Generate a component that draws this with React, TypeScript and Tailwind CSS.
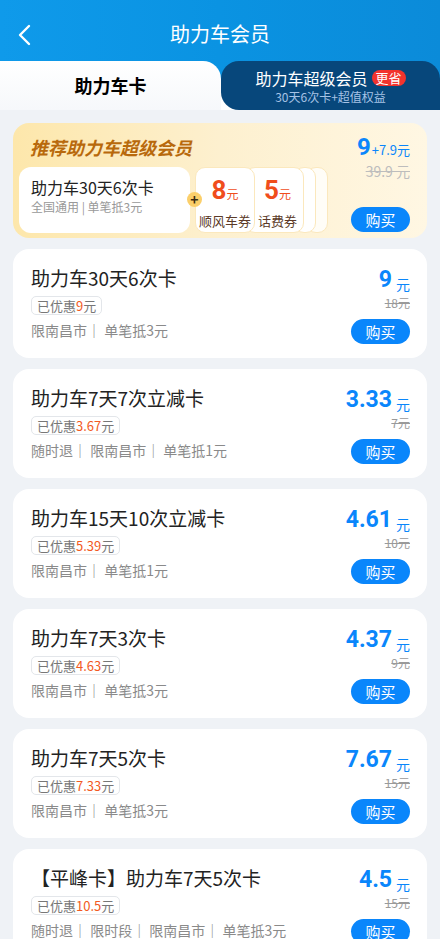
const cn = '"Noto Sans CJK SC", "Noto Sans", sans-serif';
const num = 'Roboto, "Noto Sans CJK SC", sans-serif';

interface CardData {
  title: string;
  saved: string;
  tags: string[];
  price: string;
  origin: string;
}

const cards: CardData[] = [
  { title: '助力车30天6次卡', saved: '9', tags: ['限南昌市', '单笔抵3元'], price: '9', origin: '18元' },
  { title: '助力车7天7次立减卡', saved: '3.67', tags: ['随时退', '限南昌市', '单笔抵1元'], price: '3.33', origin: '7元' },
  { title: '助力车15天10次立减卡', saved: '5.39', tags: ['限南昌市', '单笔抵1元'], price: '4.61', origin: '10元' },
  { title: '助力车7天3次卡', saved: '4.63', tags: ['限南昌市', '单笔抵3元'], price: '4.37', origin: '9元' },
  { title: '助力车7天5次卡', saved: '7.33', tags: ['限南昌市', '单笔抵3元'], price: '7.67', origin: '15元' },
  { title: '【平峰卡】助力车7天5次卡', saved: '10.5', tags: ['随时退', '限时段', '限南昌市', '单笔抵3元'], price: '4.5', origin: '15元' },
];

function BuyButton() {
  return (
    <button className="w-[59px] h-[25px] rounded-full bg-[#0a86fb] text-white text-[15px] leading-[25px]">
      购买
    </button>
  );
}

function CardItem({ card }: { card: CardData }) {
  return (
    <div className="h-[109px] shrink-0 bg-white rounded-[16px] pl-[18px] pr-[17px] pt-[16px] flex justify-between">
      <div className="flex flex-col items-start">
        <div className="text-[19px] leading-[26px] text-[#222]">{card.title}</div>
        <div className="mt-[5px] h-[19px] px-[5px] border border-[#e3e6ea] rounded-[5px] text-[13px] leading-[17px] text-[#777]">
          已优惠<span className="text-[#f25a22]">{card.saved}</span>元
        </div>
        <div className="mt-[5px] text-[14px] leading-[20px] text-[#8a8a8a] whitespace-pre">
          {card.tags.join('｜ ')}
        </div>
      </div>
      <div className="flex flex-col items-end">
        <div className="h-[30px] flex items-end text-[#0a86fb]">
          <span className="text-[23px] leading-[30px] font-bold" style={{ fontFamily: num }}>{card.price}</span>
          <span className="text-[14px] leading-[22px] ml-[4px]">元</span>
        </div>
        <div className="text-[12px] leading-[16px] text-[#9a9a9a] line-through">{card.origin}</div>
        <div className="mt-[8px]">
          <BuyButton />
        </div>
      </div>
    </div>
  );
}

function SuperCard() {
  return (
    <div className="h-[115px] rounded-[16px] bg-gradient-to-r from-[#fde7ab] via-[#fdf0cf] to-[#fff7e3] pl-[6px] pr-[17px] flex justify-between">
      <div className="flex flex-col">
        <div className="h-[44px] pl-[11px] pt-[11px] text-[18px] leading-[26px] font-bold text-[#b8690c] italic">
          推荐助力车超级会员
        </div>
        <div className="flex items-start">
          <div className="w-[171px] h-[66px] bg-white rounded-[12px] pl-[12px] pt-[9px]">
            <div className="text-[16px] leading-[22px] text-[#222]">助力车30天6次卡</div>
            <div className="text-[12px] leading-[18px] text-[#999] whitespace-pre">全国通用 | 单笔抵3元</div>
          </div>
          <div className="relative flex">
            <div className="absolute left-[-3px] top-[25px] z-20 w-[15px] h-[15px] rounded-full bg-[#fbcf6a] text-[#3a2a10] text-[14px] leading-[14px] text-center font-bold">
              +
            </div>
            <div className="relative z-10 ml-[5px] w-[60px] h-[66px] bg-white rounded-[10px] border border-[#fbe8bd] flex flex-col items-center pt-[8px]">
              <div className="text-[#f04d1c] leading-[28px]">
                <span className="text-[26px] font-bold" style={{ fontFamily: num }}>8</span>
                <span className="text-[12px]">元</span>
              </div>
              <div className="text-[13px] leading-[18px] text-[#5b3a28] mt-[4px] whitespace-nowrap">顺风车券</div>
            </div>
            <div className="relative z-[5] -ml-[10px] w-[59px] h-[66px] bg-white rounded-[10px] border border-[#fbe8bd] flex flex-col items-center pt-[8px] pl-[6px]">
              <div className="text-[#f04d1c] leading-[28px]">
                <span className="text-[26px] font-bold" style={{ fontFamily: num }}>5</span>
                <span className="text-[12px]">元</span>
              </div>
              <div className="text-[13px] leading-[18px] text-[#5b3a28] mt-[4px] whitespace-nowrap">话费券</div>
            </div>
            <div className="relative z-[4] -ml-[10px] w-[22px] h-[66px] bg-white rounded-[10px] border border-[#fbe8bd]" />
            <div className="relative z-[3] -ml-[10px] w-[22px] h-[66px] bg-[#fffdf7] rounded-[10px] border border-[#fbe8bd]" />
          </div>
        </div>
      </div>
      <div className="flex flex-col items-end pt-[10px]">
        <div className="flex items-end text-[#0a86fb] h-[28px]">
          <span className="text-[24px] leading-[28px] font-bold" style={{ fontFamily: num }}>9</span>
          <span className="text-[13px] leading-[22px] ml-[1px]">+7.9元</span>
        </div>
        <div className="text-[14px] leading-[20px] text-[#bdbdbd] line-through whitespace-pre">39.9 元</div>
        <div className="mt-[26px]">
          <BuyButton />
        </div>
      </div>
    </div>
  );
}

export default function App() {
  return (
    <div className="w-[440px] h-[939px] overflow-hidden bg-[#eff2f6]" style={{ fontFamily: cn }}>
      {/* header */}
      <div className="bg-gradient-to-r from-[#0f9aea] via-[#0a93e2] to-[#0b8bd9]">
        <div className="h-[61px] relative flex items-center justify-center">
          <svg className="absolute left-[17px] top-[24px]" width="14" height="22" viewBox="0 0 14 22" fill="none">
            <path d="M12 2 L3 11 L12 20" stroke="white" strokeWidth="2.4" strokeLinecap="round" strokeLinejoin="round" />
          </svg>
          <div className="text-white text-[20px] leading-[28px] mt-[6px]">助力车会员</div>
        </div>
        <div className="h-[49px] flex bg-[linear-gradient(to_bottom,transparent_50%,#ffffff_50%)]">
          <div className="w-[221px] bg-gradient-to-b from-white to-[#f6f8fb] rounded-tr-[18px] flex items-center justify-center">
            <span className="text-[18px] font-bold text-black">助力车卡</span>
          </div>
          <div className="flex-1 bg-[#07477b] rounded-t-[18px] rounded-bl-[18px] flex flex-col items-center pt-[6px]">
            <div className="flex items-center">
              <span className="text-white text-[16px] leading-[22px]">助力车超级会员</span>
              <span className="ml-[4px] h-[16px] px-[4px] rounded-full bg-[#f2332d] text-white text-[13px] leading-[16px]">更省</span>
            </div>
            <div className="text-[12px] leading-[16px] text-[#a6c3e6]">30天6次卡+超值权益</div>
          </div>
        </div>
      </div>
      {/* content */}
      <div className="px-[13px] pt-[13px] flex flex-col gap-[11px]">
        <SuperCard />
        {cards.map((c, i) => (
          <CardItem key={i} card={c} />
        ))}
      </div>
    </div>
  );
}
